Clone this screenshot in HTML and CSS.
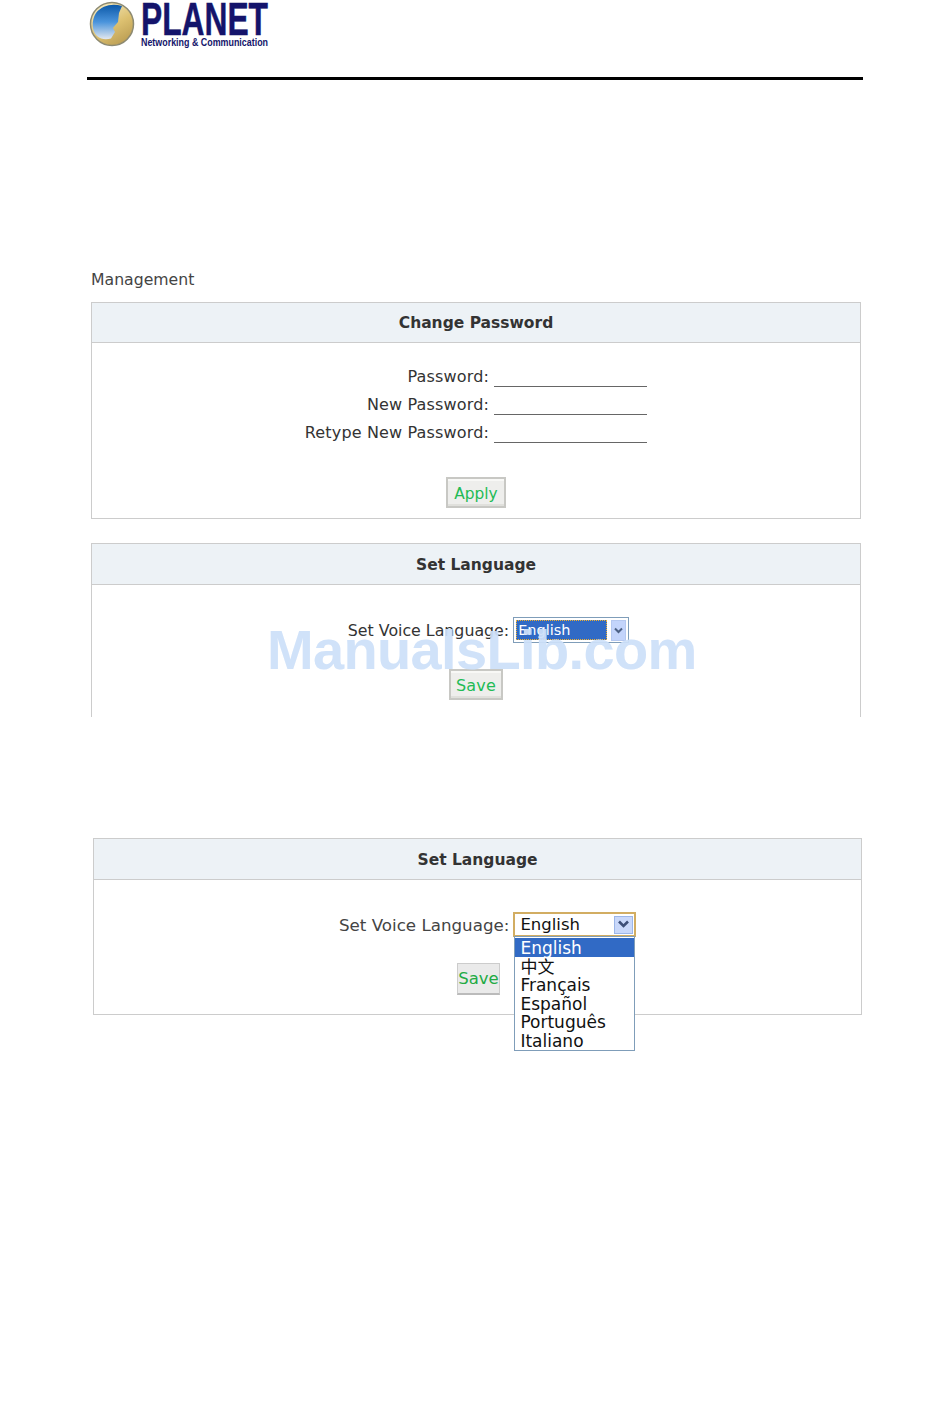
FILE: index.html
```html
<!DOCTYPE html>
<html lang="en">
<head>
<meta charset="utf-8">
<title>Management</title>
<link rel="stylesheet" href="styles.css">
</head>
<body>
<div class="page">
    <div class="header">
        <svg class="logo" width="260" height="50" viewBox="0 0 260 50">
            <defs>
                <linearGradient id="gold" x1="0.2" y1="0" x2="0.8" y2="1">
                    <stop offset="0" stop-color="#f6ecc4"/>
                    <stop offset="0.55" stop-color="#dcc070"/>
                    <stop offset="1" stop-color="#b89a50"/>
                </linearGradient>
                <linearGradient id="blue" x1="0" y1="0" x2="0" y2="1">
                    <stop offset="0" stop-color="#0c58a8"/>
                    <stop offset="0.5" stop-color="#4a94dc"/>
                    <stop offset="1" stop-color="#e4e8ee"/>
                </linearGradient>
            </defs>
            <circle cx="23" cy="24" r="21.500" fill="url(#gold)" stroke="#8d8a72" stroke-width="1.500"/>
            <path d="M33 6C24 3 13 5 7 13 2 21 3 31 8 36c4 3.500 9 4 14 2.500l4-6.500-2-4 2-2.500 3-3.500 1-9z" fill="url(#blue)"/>
            <text class="logo-name" x="52" y="35" textLength="127" lengthAdjust="spacingAndGlyphs">PLANET</text>
            <text class="logo-sub" x="52" y="46" textLength="127" lengthAdjust="spacingAndGlyphs">Networking &amp; Communication</text>
        </svg>
    </div>

    <div class="crumb">Management</div>

    <div class="panel panel-pass">
        <div class="panel-title">Change Password</div>
        <div class="pass-form">
            <div class="row"><label>Password:</label><span class="line"></span></div>
            <div class="row"><label>New Password:</label><span class="line"></span></div>
            <div class="row"><label>Retype New Password:</label><span class="line"></span></div>
        </div>
        <div class="actions"><span class="btn btn-apply">Apply</span></div>
    </div>

    <div class="panel panel-lang">
        <div class="panel-title">Set Language</div>
        <div class="lang-row">
            <span class="lang-label">Set Voice Language:</span>
            <div class="select select-focus">
                <span class="select-value">English</span>
                <span class="arrow arrow-small">
                    <svg width="9" height="7" viewBox="0 0 9 7"><path d="M1 1.500l3.500 3.500 3.500-3.500" fill="none" stroke="#4d6185" stroke-width="2"/></svg>
                </span>
            </div>
        </div>
        <div class="actions-lang"><span class="btn btn-save">Save</span></div>
    </div>

    <div class="panel panel-open">
        <div class="panel-title">Set Language</div>
        <div class="open-row">
            <span class="open-label">Set Voice Language:</span>
            <div class="open-select">
                <span class="open-value">English</span>
                <span class="arrow arrow-big">
                    <svg width="13" height="9" viewBox="0 0 13 9"><path d="M2 1.500l4.500 4.500 4.500-4.500" fill="none" stroke="#3d4f78" stroke-width="2.600"/></svg>
                </span>
                <ul class="options">
                    <li class="selected">English</li>
                    <li>中文</li>
                    <li>Français</li>
                    <li>Español</li>
                    <li>Português</li>
                    <li>Italiano</li>
                </ul>
            </div>
        </div>
        <div class="save-row"><span class="btn-flat">Save</span></div>
    </div>

    <div class="watermark">ManualsLib.com</div>
</div>
</body>
</html>
```

FILE: styles.css
```css
body{
    margin: 0;
    background-color: #fff;
    color: #333;
    font-family: "DejaVu Sans", Verdana, sans-serif;
}

.page{
    width: 950px;
    height: 1409px;
    position: relative;
    overflow: hidden;
}

/* logo and black rule */
.header{
    margin-left: 87px;
    width: 776px;
    height: 77px;
    border-bottom: 3px solid #000;
}
.logo{
    display: block;
    margin-left: 2px;
}
.logo-name, .logo-sub{
    fill: #14146b;
    font-family: "Liberation Sans", Arial, sans-serif;
    font-weight: bold;
}
.logo-name{
    font-size: 46px;
    stroke: #14146b;
    stroke-width: 0.5px;
}
.logo-sub{
    font-size: 11.500px;
}

.crumb{
    margin: 190px 0 0 91px;
    font-size: 15.700px;
    line-height: 20px;
    color: #444;
}

.panel{
    width: 768px;
    border: 1px solid #ccc;
}
.panel-title{
    height: 39px;
    line-height: 40px;
    background-color: #edf2f6;
    border-bottom: 1px solid #ccc;
    text-align: center;
    font-size: 15.500px;
    font-weight: bold;
}

.panel-pass{
    margin: 12px 0 0 91px;
    height: 215px;
}
.pass-form{
    padding-top: 18px;
}
.row{
    display: flex;
    justify-content: flex-end;
    height: 28px;
    width: 555px;
}
.row label{
    font-size: 16px;
    line-height: 32px;
    letter-spacing: 0.15px;
    margin-right: 5px;
}
.line{
    width: 153px;
    height: 25px;
    border-bottom: 1px solid #666;
}
.actions{
    text-align: center;
    margin-top: 32px;
}
.btn{
    display: inline-block;
    border: 2px solid #c8c8c4;
    background-color: #eeeeec;
    box-shadow: inset 0 2px 0 #f8f8f6, inset 0 -2px 0 #e0e0dc;
    color: #22bb55;
    text-align: center;
    box-sizing: border-box;
}
.btn-apply{
    width: 60px;
    height: 31px;
    line-height: 30px;
    font-size: 15.400px;
}
.btn-save{
    width: 54px;
    height: 31px;
    line-height: 29px;
    font-size: 16px;
    letter-spacing: 0.2px;
}

.panel-lang{
    margin: 24px 0 0 91px;
    height: 173px;
    border-bottom: none;
}
.panel-lang .panel-title{
    height: 40px;
    line-height: 42px;
}
.lang-row{
    display: flex;
    justify-content: center;
    align-items: flex-start;
    padding-top: 32px;
    padding-left: 25px;
    gap: 4px;
}
.lang-label{
    font-size: 15.800px;
    line-height: 28px;
}
.select{
    width: 116px;
    height: 26px;
    border: 1px solid #7f9db9;
    box-sizing: border-box;
    display: flex;
    align-items: center;
    padding: 2px;
    gap: 4px;
}
.select-value{
    width: 91px;
    height: 20px;
    line-height: 19px;
    background-color: #316ac5;
    border: 1px dotted #f0b030;
    box-sizing: border-box;
    color: #fff;
    font-size: 14.500px;
    padding-left: 1px;
}
.arrow{
    display: flex;
    align-items: center;
    justify-content: center;
    background-color: #c3d4fb;
    border: 1px solid #b5c8f0;
    box-sizing: border-box;
}
.arrow-small{
    width: 15px;
    height: 21px;
}
.actions-lang{
    text-align: center;
    margin-top: 24px;
}

.panel-open{
    width: 767px;
    margin: 121px 0 0 93px;
    height: 175px;
}
.panel-open .panel-title{
    height: 40px;
    line-height: 43px;
}
.open-row{
    display: flex;
    align-items: flex-start;
    padding: 32px 0 0 245px;
    gap: 4px;
}
.open-label{
    font-size: 16.700px;
    line-height: 26px;
    color: #444;
}
.open-select{
    position: relative;
    width: 123px;
    height: 25px;
    border: 2px solid #d2ad62;
    box-sizing: border-box;
    display: flex;
    align-items: center;
    justify-content: space-between;
    padding: 0 1px 0 5px;
}
.open-value{
    font-size: 16.500px;
    line-height: 26px;
    color: #111;
}
.arrow-big{
    width: 19px;
    height: 18px;
    background-color: #c9d8fa;
    border-color: #9cb6e8;
}
.options{
    position: absolute;
    left: -1px;
    top: 22px;
    width: 121px;
    margin: 0;
    padding: 1px 0 0;
    list-style-type: none;
    background-color: #fff;
    border: 1px solid #7f9db9;
    box-sizing: border-box;
    height: 115px;
    z-index: 2;
}
.options li{
    height: 18.500px;
    line-height: 20px;
    padding-left: 5px;
    font-size: 17px;
    color: #111;
    font-family: "DejaVu Sans", "Noto Sans CJK SC", sans-serif;
}
.options li.selected{
    background-color: #316ac5;
    color: #fff;
}
.save-row{
    padding: 25px 0 0 363px;
}
.btn-flat{
    display: block;
    width: 43px;
    height: 32px;
    line-height: 29px;
    background-color: #eaeaea;
    border: 1px solid #ccc;
    border-bottom: 2px solid #bbb;
    box-sizing: border-box;
    color: #22aa44;
    font-size: 16.500px;
    text-align: center;
}

/* sits on top of the page, hides the text under it */
.watermark{
    position: absolute;
    left: 267px;
    top: 618px;
    font-family: "Liberation Sans", Arial, sans-serif;
    font-weight: bold;
    font-size: 56px;
    letter-spacing: -0.65px;
    line-height: 64px;
    color: #cde0f9;
    opacity: 0.93;
    white-space: nowrap;
}
```
